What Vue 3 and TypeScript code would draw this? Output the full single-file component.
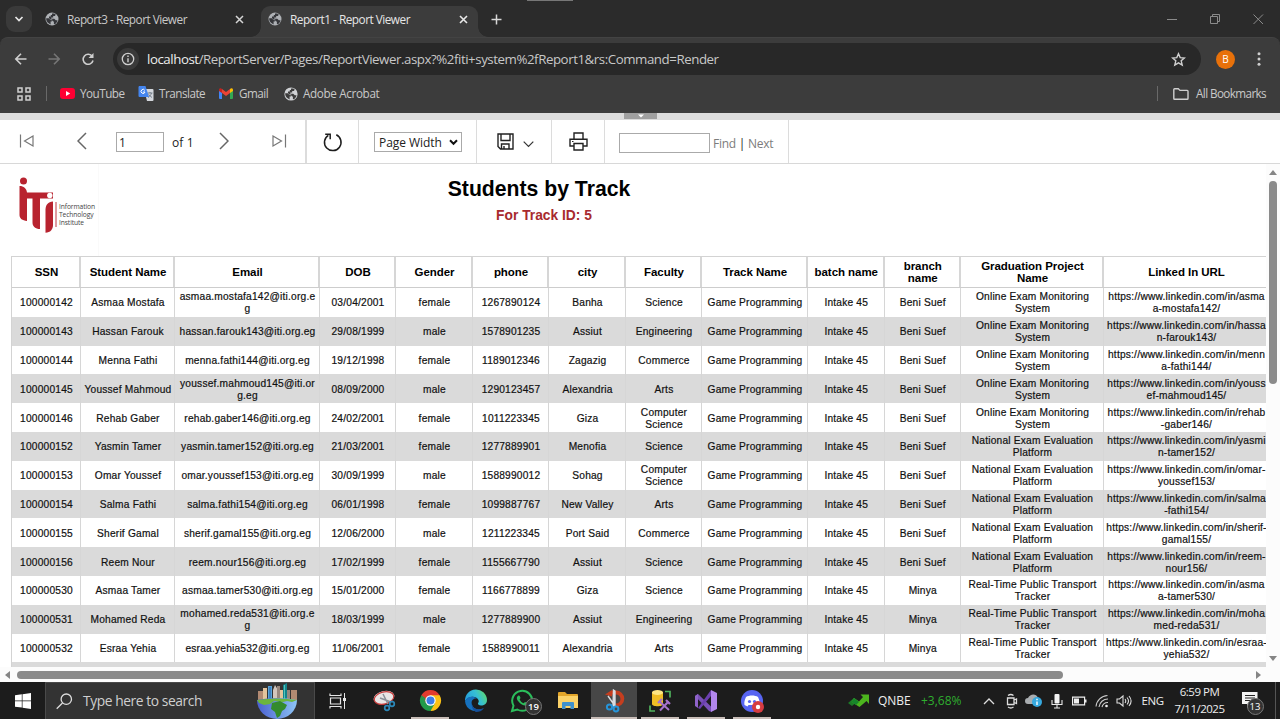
<script setup lang="ts">
interface Student {
  ssn: string
  name: string
  email: string
  dob: string
  gender: string
  phone: string
  city: string
  faculty: string
  branch: string
  project: string
  link: string
}

const headers: string[] = [
  'SSN', 'Student Name', 'Email', 'DOB', 'Gender', 'phone', 'city', 'Faculty',
  'Track Name', 'batch name', 'branch\nname', 'Graduation Project\nName', 'Linked In URL',
]

const exam = 'Online Exam Monitoring\nSystem'
const national = 'National Exam Evaluation\nPlatform'
const transport = 'Real-Time Public Transport\nTracker'
const base = 'https://www.linkedin.com/in/'

function student(
  ssn: string, name: string, email: string, dob: string, gender: string, phone: string,
  city: string, faculty: string, branch: string, project: string, link: string,
): Student {
  return { ssn, name, email, dob, gender, phone, city, faculty, branch, project, link: base + link }
}

const students: Student[] = [
  student('100000142', 'Asmaa Mostafa', 'asmaa.mostafa142@iti.org.e\ng', '03/04/2001', 'female', '1267890124', 'Banha', 'Science', 'Beni Suef', exam, 'asma\na-mostafa142/'),
  student('100000143', 'Hassan Farouk', 'hassan.farouk143@iti.org.eg', '29/08/1999', 'male', '1578901235', 'Assiut', 'Engineering', 'Beni Suef', exam, 'hassa\nn-farouk143/'),
  student('100000144', 'Menna Fathi', 'menna.fathi144@iti.org.eg', '19/12/1998', 'female', '1189012346', 'Zagazig', 'Commerce', 'Beni Suef', exam, 'menn\na-fathi144/'),
  student('100000145', 'Youssef Mahmoud', 'youssef.mahmoud145@iti.or\ng.eg', '08/09/2000', 'male', '1290123457', 'Alexandria', 'Arts', 'Beni Suef', exam, 'youss\nef-mahmoud145/'),
  student('100000146', 'Rehab Gaber', 'rehab.gaber146@iti.org.eg', '24/02/2001', 'female', '1011223345', 'Giza', 'Computer\nScience', 'Beni Suef', exam, 'rehab\n-gaber146/'),
  student('100000152', 'Yasmin Tamer', 'yasmin.tamer152@iti.org.eg', '21/03/2001', 'female', '1277889901', 'Menofia', 'Science', 'Beni Suef', national, 'yasmi\nn-tamer152/'),
  student('100000153', 'Omar Youssef', 'omar.youssef153@iti.org.eg', '30/09/1999', 'male', '1588990012', 'Sohag', 'Computer\nScience', 'Beni Suef', national, 'omar-\nyoussef153/'),
  student('100000154', 'Salma Fathi', 'salma.fathi154@iti.org.eg', '06/01/1998', 'female', '1099887767', 'New Valley', 'Arts', 'Beni Suef', national, 'salma\n-fathi154/'),
  student('100000155', 'Sherif Gamal', 'sherif.gamal155@iti.org.eg', '12/06/2000', 'male', '1211223345', 'Port Said', 'Commerce', 'Beni Suef', national, 'sherif-\ngamal155/'),
  student('100000156', 'Reem Nour', 'reem.nour156@iti.org.eg', '17/02/1999', 'female', '1155667790', 'Assiut', 'Science', 'Beni Suef', national, 'reem-\nnour156/'),
  student('100000530', 'Asmaa Tamer', 'asmaa.tamer530@iti.org.eg', '15/01/2000', 'female', '1166778899', 'Giza', 'Science', 'Minya', transport, 'asma\na-tamer530/'),
  student('100000531', 'Mohamed Reda', 'mohamed.reda531@iti.org.e\ng', '18/03/1999', 'male', '1277889900', 'Assiut', 'Engineering', 'Minya', transport, 'moha\nmed-reda531/'),
  student('100000532', 'Esraa Yehia', 'esraa.yehia532@iti.org.eg', '11/06/2001', 'female', '1588990011', 'Alexandria', 'Arts', 'Minya', transport, 'esraa-\nyehia532/'),
]

function cells(s: Student): string[] {
  return [s.ssn, s.name, s.email, s.dob, s.gender, s.phone, s.city, s.faculty,
    'Game Programming', 'Intake 45', s.branch, s.project, s.link]
}
</script>

<template>
  <div class="screen">
    <!-- Tab strip -->
    <div class="tabstrip">
      <div class="tabsearch">
        <svg width="10" height="8" viewBox="0 0 10 8"><path d="M1.500 2l3.500 3.500L8.500 2" fill="none" stroke="#e8e8e8" stroke-width="1.700" /></svg>
      </div>
      <div class="tab">
        <svg class="globe" width="14" height="14" viewBox="0 0 14 14"><circle cx="7" cy="7" r="6.500" fill="#aeb1b5" /><path d="M1.200 6.300h2.600l1.500 1.500h1.500v1.600H5.600v3l-1.500-.8C2 10.500 1 8.500 1.200 6.300zM7 1.500l2.200-.1 1.500 1-.7 1.600H8.200v1.500H6.300v1.300h3l1.500 1.500h1.700c-.2 1.700-1.300 3.200-2.600 4l-1-.2V9.700L7.200 8.800V7.300H5.200L4 6V4.500h1.800V3H7z" fill="#35363a" /></svg>
        <span class="tabtext t1">Report3 - Report Viewer</span>
        <svg class="x" width="9" height="9" viewBox="0 0 9 9"><path d="M1 1l7 7M8 1L1 8" stroke="#d5d5d5" stroke-width="1.500" /></svg>
      </div>
      <div class="tab active">
        <svg class="globe" width="14" height="14" viewBox="0 0 14 14"><circle cx="7" cy="7" r="6.500" fill="#aeb1b5" /><path d="M1.200 6.300h2.600l1.500 1.500h1.500v1.600H5.600v3l-1.500-.8C2 10.500 1 8.500 1.200 6.300zM7 1.500l2.200-.1 1.500 1-.7 1.600H8.200v1.500H6.300v1.300h3l1.500 1.500h1.700c-.2 1.700-1.300 3.200-2.600 4l-1-.2V9.700L7.200 8.800V7.300H5.200L4 6V4.500h1.800V3H7z" fill="#35363a" /></svg>
        <span class="tabtext t2">Report1 - Report Viewer</span>
        <svg class="x" width="9" height="9" viewBox="0 0 9 9"><path d="M1 1l7 7M8 1L1 8" stroke="#e8e8e8" stroke-width="1.600" /></svg>
      </div>
      <svg class="plus" width="11" height="11" viewBox="0 0 11 11"><path d="M5.500 .5v10M.5 5.500h10" stroke="#d8d8d8" stroke-width="1.500" /></svg>
      <svg class="winctl" width="98" height="12" viewBox="0 0 98 12"><path d="M0 6.500h10M43.500 3.500h7v7h-7zM45.500 3.500v-2h7v7h-2M86.500 1.500l9.500 9.500M96 1.500L86.500 11" fill="none" stroke="#8b8b8b" /></svg>
      <div class="topmark"></div>
    </div>

    <!-- Address bar -->
    <div class="addressbar">
      <svg class="nav" width="84" height="14" viewBox="0 0 84 14" fill="none" stroke-width="1.600">
        <path d="M12.500 7H1.800M7 1.700L1.800 7 7 12.300" stroke="#cfcfcf" />
        <path d="M34.500 7h10.700M40 1.700L45.200 7 40 12.300" stroke="#767676" />
        <path d="M78.300 4.500A5 5 0 1 0 79 8.500" stroke="#cfcfcf" /><path d="M79.500 1v5h-5z" fill="#cfcfcf" />
      </svg>
      <div class="omnibox">
        <span class="info"><svg width="14" height="14" viewBox="0 0 14 14"><circle cx="7" cy="7" r="5.700" fill="none" stroke="#d0d0d0" stroke-width="1.300" /><path d="M7 6.200v4M7 3.600v1.500" stroke="#d0d0d0" stroke-width="1.400" /></svg></span>
        <span class="url"><b>localhost</b>/ReportServer/Pages/ReportViewer.aspx?%2fiti+system%2fReport1&amp;rs:Command=Render</span>
        <svg class="star" width="15" height="15" viewBox="0 0 15 15"><path d="M7.500 1.700l1.700 3.900 4.200.4-3.200 2.800 1 4.200-3.700-2.200L3.800 13l1-4.200L1.600 6l4.200-.4z" fill="none" stroke="#d0d0d0" stroke-width="1.400" /></svg>
      </div>
      <span class="avatar">B</span>
      <svg class="dots" width="4" height="14" viewBox="0 0 4 14" fill="#cfcfcf"><circle cx="2" cy="1.700" r="1.500" /><circle cx="2" cy="7" r="1.500" /><circle cx="2" cy="12.300" r="1.500" /></svg>
    </div>

    <!-- Bookmarks -->
    <div class="bookmarks">
      <svg class="grid" width="14" height="14" viewBox="0 0 14 14"><path d="M1 1h4v4H1zM9 1h4v4H9zM1 9h4v4H1zM9 9h4v4H9z" fill="none" stroke="#cfcfcf" stroke-width="1.500" /></svg>
      <i class="bar"></i>
      <div class="bm yt"><svg width="15" height="11" viewBox="0 0 15 11"><rect width="15" height="11" rx="3" fill="#ff0033" /><path d="M6 3l4.200 2.500L6 8z" fill="#fff" /></svg><span>YouTube</span></div>
      <div class="bm trn"><svg width="16" height="15" viewBox="0 0 16 15"><path d="M6 3h8.500a1 1 0 0 1 1 1v10a1 1 0 0 1-1 1H9z" fill="#d4d7dc" /><path d="M9.500 7h5M12 6v1M13.500 7c-.5 2-2 3.500-3.500 4.500M10.500 8.500l3.500 3" stroke="#6b7480" stroke-width=".9" fill="none" /><path d="M1 0h6.500l3.500 11H1.500a1 1 0 0 1-1-1V1z" fill="#4485ee" /><path d="M6.800 4.400A2 2 0 1 0 7 6H5" fill="none" stroke="#fff" /></svg><span>Translate</span></div>
      <div class="bm gm"><svg width="14" height="11" viewBox="0 0 14 11"><path d="M0 2l3 2v7H1a1 1 0 0 1-1-1z" fill="#4285f4" /><path d="M14 2l-3 2v7h2a1 1 0 0 0 1-1z" fill="#34a853" /><path d="M3 1l4 3 4-3v4L7 8 3 5z" fill="#ea4335" /><path d="M0 2C0 0 2 0 3 1v4L0 3z" fill="#c5221f" /><path d="M14 2c0-2-2-2-3-1v4l3-2z" fill="#fbbc04" /></svg><span>Gmail</span></div>
      <div class="bm aa"><svg width="14" height="14" viewBox="0 0 14 14"><circle cx="7" cy="7" r="6.600" fill="#d0d2d5" /><path d="M1.200 6.300h2.600l1.500 1.500h1.500v1.600H5.600v3l-1.500-.8C2 10.500 1 8.500 1.200 6.300zM7 1.500l2.200-.1 1.500 1-.7 1.600H8.200v1.500H6.300v1.300h3l1.500 1.500h1.700c-.2 1.700-1.300 3.200-2.600 4l-1-.2V9.700L7.200 8.800V7.300H5.200L4 6V4.500h1.800V3H7z" fill="#3c3c3c" /></svg><span>Adobe Acrobat</span></div>
      <i class="bar right"></i>
      <div class="bm all"><svg width="16" height="12" viewBox="0 0 16 12"><path d="M.8 1.600q0-.8.8-.8h3.700L7 2.400h7.200q.8 0 .8.800v7.200q0 .8-.8.8H1.600q-.8 0-.8-.8z" fill="none" stroke="#cfcfcf" stroke-width="1.400" /></svg><span>All Bookmarks</span></div>
    </div>

    <div class="splitter"><span><svg width="6" height="4" viewBox="0 0 6 4"><path d="M0 .5h6L3 3.500z" fill="#fff" /></svg></span></div>

    <!-- Report toolbar -->
    <div class="rtoolbar">
      <div class="group pager">
        <svg class="p-first" width="15" height="14" viewBox="0 0 15 14"><path d="M1.500.5v13M14 2L5.500 7l8.500 5z" fill="none" stroke="#777" stroke-width="1.200" /></svg>
        <svg class="p-prev" width="10" height="18" viewBox="0 0 10 18"><path d="M9 1L1 9l8 8" fill="none" stroke="#666" stroke-width="1.500" /></svg>
        <span class="box page">1</span>
        <span class="of">of 1</span>
        <svg class="p-next" width="10" height="18" viewBox="0 0 10 18"><path d="M1 1l8 8-8 8" fill="none" stroke="#666" stroke-width="1.500" /></svg>
        <svg class="p-last" width="15" height="14" viewBox="0 0 15 14"><path d="M13.500.5v13M1 2l8.500 5L1 12z" fill="none" stroke="#777" stroke-width="1.200" /></svg>
      </div>
      <div class="group refresh">
        <svg width="20" height="20" viewBox="0 0 20 20"><path d="M13.300 2.800A8.300 8.300 0 1 1 5.300 3.300M2.200 2.300h5v5" fill="none" stroke="#1d1d1d" stroke-width="1.500" /></svg>
      </div>
      <div class="group zoom">
        <span class="box select"><span>Page Width</span><svg width="9" height="7" viewBox="0 0 9 7"><path d="M1 1.300l3.500 3.500L8 1.300" fill="none" stroke="#111" stroke-width="2" /></svg></span>
      </div>
      <div class="group save">
        <svg width="17" height="17" viewBox="0 0 17 17"><path d="M1 1h15v15H3.500L1 13.500zM4 1v6.500h9V1M4.500 16v-5h7.500v5M7 13v3" fill="none" stroke="#222" stroke-width="1.400" /></svg>
        <svg class="caret" width="11" height="7" viewBox="0 0 11 7"><path d="M.7 .7l4.800 4.800L10.300.7" fill="none" stroke="#333" stroke-width="1.200" /></svg>
      </div>
      <div class="group print">
        <svg width="19" height="19" viewBox="0 0 19 19"><path d="M5 7V1h9v6M4.500 14H1V7.200h17V14h-3.500M5 11.500h9V18H5z" fill="none" stroke="#222" stroke-width="1.400" /><path d="M3 9.500h1.500" stroke="#222" /></svg>
      </div>
      <div class="group find">
        <span class="box search"></span>
        <span class="fn">Find <b>|</b> Next</span>
      </div>
    </div>

    <!-- Report body -->
    <div class="viewer">
      <div class="report">
        <div class="head">
          <div class="logo">
            <svg width="38" height="56" viewBox="0 0 38 56">
              <circle cx="4.500" cy="4" r="3.500" fill="#b8232f" />
              <path d="M.5 9c4.200 0 7 2.500 7.500 6.500h26v6H21v30.500c-4.500 0-7.500-2.500-7.500-6.500V21.500H8v22.500C3.300 43.500.5 41.500.5 38z" fill="#b8232f" />
              <path d="M34 24.500V48c0 4.500-2.700 7.500-7.500 7.800V32.500c0-4.500 2.500-7.500 7.500-8z" fill="#b8232f" />
              <circle cx="30.800" cy="18.500" r="2.700" fill="#fff" />
              <path d="M37 25v25" stroke="#b8232f" stroke-width=".9" />
            </svg>
            <span>Information<br>Technology<br>Institute</span>
          </div>
          <div class="titles">
            <h1>Students by Track</h1>
            <h2>For Track ID: 5</h2>
          </div>
        </div>
        <div class="table">
          <div class="tr th"><div v-for="h in headers" :key="h" class="td"><span>{{ h }}</span></div></div>
          <div v-for="s in students" :key="s.ssn" class="tr"><div v-for="(c, i) in cells(s)" :key="i" class="td"><span>{{ c }}</span></div></div>
          <div class="tr"></div>
        </div>
      </div>
      <div class="vscroll">
        <svg width="8" height="5" viewBox="0 0 8 5"><path d="M0 5l4-5 4 5z" fill="#858585" /></svg>
        <i></i>
        <svg class="down" width="8" height="5" viewBox="0 0 8 5"><path d="M0 0l4 5 4-5z" fill="#858585" /></svg>
      </div>
    </div>
    <div class="hscroll">
      <svg width="5" height="8" viewBox="0 0 5 8"><path d="M5 0L0 4l5 4z" fill="#858585" /></svg>
      <i></i>
      <svg class="right" width="5" height="8" viewBox="0 0 5 8"><path d="M0 0l5 4-5 4z" fill="#858585" /></svg>
    </div>

    <!-- Taskbar -->
    <div class="taskbar">
      <div class="start"><svg width="16" height="16" viewBox="0 0 16 16" fill="#fff"><path d="M0 2.200l6.800-.9v6.300H0zM7.500 1.200L16 0v7.600H7.500zM0 8.300h6.800v6.300L0 13.700zM7.500 8.300H16V16l-8.500-1.200z" /></svg></div>
      <div class="tsearch">
        <svg width="17" height="17" viewBox="0 0 17 17"><circle cx="10.300" cy="6.200" r="5.200" fill="none" stroke="#ddd" stroke-width="1.300" /><path d="M6.500 10L.7 15.800" stroke="#ddd" stroke-width="1.300" /></svg>
        <span>Type here to search</span>
        <svg class="city" width="42" height="36" viewBox="0 0 42 36">
          <defs><linearGradient id="sea" x1="0" x2="1"><stop offset="0" stop-color="#4a5fd0" /><stop offset="1" stop-color="#8dc4f5" /></linearGradient></defs>
          <path d="M2 8h5v12H2zM35 7h6v10h-6z" fill="#b28a72" />
          <path d="M7 5h4v15H7zM24 7h4v12h-4z" fill="#e3c49c" />
          <path d="M12 3h4v15h-4z" fill="#58a4dc" /><path d="M13.500 4h1v13h-1z" fill="#245ea6" />
          <path d="M17 7l2-5 3 5v11h-5z" fill="#d2c6bd" /><path d="M21 3h3v15h-3zM31 7h3v11h-3z" fill="#99887e" />
          <path d="M27 2l4-2v18h-4z" fill="#14848c" /><path d="M28.500 2v15" stroke="#52c7bd" />
          <path d="M1 17q20-4 40 0A20 19 0 0 1 21 36 20 19 0 0 1 1 17z" fill="url(#sea)" />
          <path d="M1 17q20-3 40 0l-5 2-5-1-4 1-9-1-4 3-6 1-5-2z" fill="#6cb53f" />
          <path d="M16 20l8-2 7 4-2 4-3 2-2 5-3 2-2-6-4-3z" fill="#348b2d" />
        </svg>
      </div>
      <div class="app"><svg width="18" height="16" viewBox="0 0 18 16"><path d="M1 .5v2h11v-2M1 15.500v-2h11v2M1.500 5h10v6h-10z" fill="none" stroke="#e6e6e6" stroke-width="1.200" /><path d="M15.500 0v16" stroke="#e6e6e6" /><path d="M14 5h3v3h-3z" fill="#e6e6e6" /></svg></div>
      <div class="app"><svg width="24" height="24" viewBox="0 0 24 24"><ellipse cx="12" cy="8.500" rx="10.500" ry="6.500" transform="rotate(-14 12 8.500)" fill="#e9e6e6" /><ellipse cx="12" cy="9" rx="10" ry="6" transform="rotate(-14 12 9)" fill="none" stroke="#c63b3b" stroke-width="1.200" /><path d="M11 5l5 10M8 9l11 4" stroke="#8c9199" stroke-width="1.500" /><circle cx="15" cy="19" r="2.300" fill="none" stroke="#2b87b8" stroke-width="1.700" /><circle cx="20" cy="15" r="2.300" fill="none" stroke="#2b87b8" stroke-width="1.700" /></svg></div>
      <div class="app run"><svg width="23" height="23" viewBox="0 0 24 24"><path d="M12 12L2.470 6.500A11 11 0 0 1 21.530 6.500z" fill="#e33b2e" /><path d="M12 12l9.530-5.500A11 11 0 0 1 12 23z" fill="#fbc116" /><path d="M12 12v11A11 11 0 0 1 2.470 6.500z" fill="#229a4a" /><path d="M12 6.500h9.530L16.800 14.700z" fill="#fbc116" /><path d="M7.200 14.700L2.470 6.500 12 6.500z" fill="#e33b2e" /><path d="M7.200 14.700L2.470 6.500l4 3z" fill="#229a4a" /><path d="M16.800 14.700L12 23l-5-8z" fill="#229a4a" /><circle cx="12" cy="12" r="5.400" fill="#fff" /><circle cx="12" cy="12" r="4.200" fill="#3d7de8" /></svg></div>
      <div class="app"><svg width="24" height="24" viewBox="0 0 24 24"><defs><linearGradient id="ea" x1="0" y1=".6" x2="1" y2=".2"><stop offset="0" stop-color="#239cdf" /><stop offset=".55" stop-color="#36bfd4" /><stop offset="1" stop-color="#60dc67" /></linearGradient></defs><path d="M1 12A11 11 0 0 1 23 11c0 4-3 5.500-6 5.500-2 0-3.500-1-3-2.200 1-1.200.9-2.300.3-3.500C12.500 7 5 6 1 12z" fill="url(#ea)" /><path d="M1 12c2-4.500 8-5.500 12-2.500-4-.5-5.700 2-5.300 5 .6 4.500 6 8 12 4.500A11 11 0 0 1 1 12z" fill="#1671be" /><path d="M8 14c-.4 4.500 5 8.500 12 5-2 3-5 4-8 4-3-1.500-5-5.500-4-9z" fill="#15509a" /></svg></div>
      <div class="app"><svg width="24" height="24" viewBox="0 0 24 24"><path d="M2 22l1.500-5.300A10 10 0 1 1 7.300 20.500z" fill="#1c1c1c" stroke="#2bbd5b" stroke-width="2" /><path d="M8.200 6.800c1.200-.7 1.700 0 2.300 2.300l-.9 1.300c1 2 2.300 3.100 4.100 3.900l1.300-1.200c2 .8 2.600 1.200 2.300 2.200-2.500 3.500-10-2-10.500-6 0-1 .6-1.900 1.400-2.500z" fill="#2bbd5b" /></svg><span class="badge">19</span></div>
      <div class="app"><svg width="22" height="20" viewBox="0 0 22 20"><path d="M1 2q0-1 1-1h6l2 2h10q1 0 1 1v5H1z" fill="#e2a52a" /><path d="M1 5h20v12H1z" fill="#fbd268" /><path d="M5 18v-6q0-1 1-1h10q1 0 1 1v6h-3.500v-3h-5v3z" fill="#3f91cc" /></svg></div>
      <div class="app run current"><svg width="22" height="24" viewBox="0 0 22 24"><path d="M9 1.500h4a7.500 7.500 0 0 1 0 16.500v-3.500a4 4 0 0 0 0-9H9z" fill="#c53e1f" /><path d="M2 5.500L9 1v6.500z" fill="#c53e1f" /><path d="M10.500 1l1.500 1v15h-2zM5 7l7 10" fill="#d9dce0" stroke="#d9dce0" stroke-width="1.400" /><circle cx="6.500" cy="18" r="2.600" fill="none" stroke="#2794d8" stroke-width="2" /><circle cx="13" cy="20" r="2.400" fill="none" stroke="#2794d8" stroke-width="2" /></svg></div>
      <div class="app run"><svg width="22" height="24" viewBox="0 0 22 24"><path d="M3 3v12c0 3 11 3 11 0V3z" fill="#f0bd25" /><ellipse cx="8.500" cy="3.500" rx="5.500" ry="2.500" fill="#ffe682" /><path d="M16 2.500h5v6M1 16.500V22h5" fill="none" stroke="#4fb05b" stroke-width="1.700" /><path d="M10 12l10 9M19.500 12.500L11 21.500" stroke="#a673cb" stroke-width="2" /><path d="M9 14l4-4M17 11l4 4" stroke="#a673cb" stroke-width="2.200" /></svg></div>
      <div class="app run"><svg width="24" height="24" viewBox="0 0 24 24"><path d="M1 7l3-2 13.500 13V23L15 22z" fill="#7950b7" /><path d="M1 7l3-2v14l-3-2z" fill="#8f63ca" /><path d="M4 19L17 1v6L6 20z" fill="#6b3fae" /><path d="M17 1l6 3v16l-6 3z" fill="#b287ed" /></svg></div>
      <div class="app run"><svg width="24" height="24" viewBox="0 0 24 24"><circle cx="12" cy="12" r="11" fill="#5865f2" /><path d="M6 8c3-2 9-2 12 0 1.500 3 2 5.500 1.500 8l-3 1.500-1-1.500h-7l-1 1.500-3-1.500C4 13.500 4.500 11 6 8z" fill="#fff" /><circle cx="9.500" cy="12.500" r="1.600" fill="#5865f2" /><circle cx="14.500" cy="12.500" r="1.600" fill="#5865f2" /><circle cx="18" cy="18" r="6" fill="#d63c41" /><circle cx="18" cy="18" r="2.200" fill="#fff" /></svg></div>
      <div class="stock">
        <svg width="21" height="13" viewBox="0 0 21 13"><path d="M0 9l6-5 4 3-6 5z" fill="#1c7a27" /><path d="M6 4l5 3.500L15 3 12.500.5H21V10l-2.500-3-7 6L3.500 8z" fill="#4cb51e" /><path d="M6 4l5 4-3 3-4.500-3z" fill="#16862b" /></svg>
        <span class="q">QNBE</span><span class="pct">+3,68%</span>
      </div>
      <div class="tray">
        <span><svg width="12" height="8" viewBox="0 0 12 8"><path d="M1 7l5-5 5 5" fill="none" stroke="#ddd" stroke-width="1.300" /></svg></span>
        <span><svg width="13" height="16" viewBox="0 0 13 16"><path d="M2.500 5h6.500v6.500H2.500zM9 7l2.500-1v4.500L9 9.500M3 2.500q2.800-2 5.500 0M3 14q2.800 2 5.500 0" fill="none" stroke="#ddd" stroke-width="1.300" /></svg></span>
        <span><svg width="18" height="15" viewBox="0 0 18 15"><path d="M3 11a3 3 0 0 1 0-6C5 1 11 0 13 5l2 3-3 3z" fill="#a9adb0" /><circle cx="12" cy="9" r="5" fill="#36a9df" /><path d="M12 8.500v3.500M12 5.700v1.500" stroke="#fff" stroke-width="1.400" /></svg></span>
        <span><svg width="12" height="16" viewBox="0 0 12 16"><rect x="3.500" y="1" width="5" height="9.500" rx="1" fill="#f2f2f2" /><path d="M1 7v4.500h10V7M6 12v3M3 15h6" fill="none" stroke="#e8e8e8" stroke-width="1.100" /></svg></span>
        <span><svg width="15" height="10" viewBox="0 0 15 10"><path d="M.6 1.100h12v7.800h-12z" fill="none" stroke="#eee" stroke-width="1.200" /><path d="M2 2.500h5v5H2zM13 3.500h1.500v3H13z" fill="#eee" /></svg></span>
        <span><svg width="14" height="14" viewBox="0 0 14 14"><path d="M1 12.500A12 12 0 0 1 12.500 1.500M4 13a9 9 0 0 1 9-8M7 13.200a5.500 5.500 0 0 1 6-4.700" fill="none" stroke="#ccc" stroke-width="1.100" /><circle cx="11.500" cy="12" r="1.300" fill="#eee" /></svg></span>
        <span><svg width="16" height="14" viewBox="0 0 16 14"><path d="M1 5h2.500L7 2v10L3.500 9H1zM9 5q1.500 2 0 4M11 3.500q3 3.500 0 7M13 2q4.200 5 0 10" fill="none" stroke="#ddd" stroke-width="1.100" /></svg></span>
      </div>
      <span class="eng">ENG</span>
      <div class="clock"><span>6:59 PM</span><span class="date">7/11/2025</span></div>
      <div class="notif"><svg width="16" height="16" viewBox="0 0 16 16"><path d="M0 0h15.500v12H8.500L5 16v-4H0z" fill="#f3f3f3" /><path d="M3 3.500h10M3 6h10M3 8.500h6" stroke="#222" /></svg><span class="badge">13</span></div>
      <i class="desk"></i>
    </div>
  </div>
</template>

<style>
html, body { margin: 0; overflow: hidden; background: #1c1c1c; }
</style>

<style scoped>
.screen { width: 1280px; height: 719px; display: flex; flex-direction: column; background: #2b2b2b; font-family: "Open Sans", "Noto Sans", sans-serif; overflow: hidden; }
.screen * { box-sizing: border-box; }
svg { display: block; flex: none; }
span { white-space: nowrap; }

.tabstrip { position: relative; height: 37px; flex: none; background: #2b2b2b; display: flex; align-items: center; padding-top: 1px; }
.tabsearch { width: 26px; height: 26px; margin-left: 6px; border-radius: 9px; background: #3a3a3a; display: flex; align-items: center; justify-content: center; }
.tab { height: 31px; width: 227px; margin-left: 1px; padding: 0 16px 0 12px; display: flex; align-items: center; }
.tab.active { width: 217px; align-self: flex-end; background: #3c3c3c; border-radius: 9px 9px 0 0; padding: 0 10px 0 7px; position: relative; margin-left: 1px; }
.tab.active::before, .tab.active::after { content: ""; position: absolute; bottom: 0; width: 10px; height: 10px; }
.tab.active::before { left: -10px; background: radial-gradient(circle at 0 0, transparent 9.500px, #3c3c3c 10px); }
.tab.active::after { right: -10px; background: radial-gradient(circle at 100% 0, transparent 9.500px, #3c3c3c 10px); }
.tab.active > * { margin-bottom: 5px; }
.tabtext { margin-left: 8px; font-size: 11.800px; letter-spacing: -0.5px; color: #c8c8c8; line-height: 16px; }
.t2 { color: #e6e6e6; }
.x { margin-left: auto; }
.plus { margin-left: 13px; }
.winctl { margin-left: auto; margin-right: 15px; }
.topmark { position: absolute; left: 527px; top: 0; width: 46px; height: 1px; background: #777; }

.addressbar { height: 43px; flex: none; background: #3c3c3c; display: flex; align-items: center; padding: 0 0 0 14px; border-top: 1px solid #434343; border-radius: 8px 8px 0 0; }
.nav { margin-right: 15px; }
.omnibox { width: 1088px; height: 32px; border-radius: 16px; background: #282828; display: flex; align-items: center; padding: 0 15px 0 4px; }
.info { width: 22px; height: 22px; border-radius: 50%; background: #3a3a3a; display: flex; align-items: center; justify-content: center; }
.url { margin-left: 8px; font-size: 13.300px; letter-spacing: -0.45px; color: #c7c7c7; line-height: 20px; }
.url b { font-weight: 400; color: #ededed; }
.star { margin-left: auto; }
.avatar { margin-left: 15px; width: 19px; height: 19px; border-radius: 50%; background: #e8710a; color: #fff; font-size: 10px; line-height: 19px; text-align: center; }
.dots { margin-left: 22px; }

.bookmarks { height: 33px; flex: none; background: #3c3c3c; display: flex; align-items: center; padding: 0 14px 6px 17px; color: #c9c9c9; font-size: 11.700px; letter-spacing: -0.5px; }
.bar { width: 1px; height: 15px; background: #696969; margin-left: 15px; }
.bm { display: flex; align-items: center; line-height: 16px; }
.bm span { margin: 0 0 2px 5px; }
.yt { margin-left: 13px; width: 78px; }
.trn { width: 81px; }
.gm { width: 65px; }
.gm span { margin-left: 6px; }
.aa { letter-spacing: -0.35px; }
.bar.right { margin-left: auto; margin-right: 15px; }
.all { width: 93px; letter-spacing: -0.6px; }
.all span { margin-left: 7px; }

.splitter { height: 7px; flex: none; background: #dcdcdc; padding-left: 624px; }
.splitter span { display: flex; width: 33px; height: 6px; background: #a0a0a0; align-items: center; justify-content: center; }

.rtoolbar { height: 44px; flex: none; background: #fff; border-bottom: 1px solid #d8d8d8; display: flex; color: #222; font-size: 12px; }
.group { display: flex; align-items: center; height: 43px; border-right: 1px solid #dcdcdc; }
.box { border: 1px solid #aaa; height: 20px; background: #fff; display: flex; align-items: center; }
.pager { width: 307px; border-right-width: 2px; padding-left: 19px; }
.p-first, .p-prev, .p-next, .p-last { margin-bottom: 1px; }
.p-prev { margin-left: 43px; }
.page { width: 48px; margin: 1px 0 0 29px; padding-left: 2px; }
.of { margin: 1px 0 0 8px; width: 22px; letter-spacing: 0.1px; }
.p-next { margin-left: 25px; }
.p-last { margin-left: 43px; }
.refresh { width: 52px; padding-left: 16px; }
.zoom { width: 118px; padding-left: 15px; }
.select { width: 88px; margin-top: 1px; padding-left: 4px; letter-spacing: -0.05px; justify-content: space-between; padding-right: 3px; }
.save { width: 75px; padding-left: 20px; }
.caret { margin: 6px 0 0 9px; }
.print { width: 53px; padding-left: 17px; }
.find { width: 184px; padding-left: 14px; }
.search { width: 91px; margin-top: 2px; }
.fn { margin: 3px 0 0 3px; color: #7c7c7c; letter-spacing: -0.25px; }
.fn b { font-weight: 400; color: #222; }

.viewer { height: 503px; flex: none; display: flex; background: #fdfdfd; }
.report { width: 1266px; overflow: hidden; padding-left: 11px; background: #fff; font-family: "Liberation Sans", Arial, sans-serif; }
.head { height: 92px; display: flex; }
.logo { width: 88px; display: flex; padding: 13px 0 0 8px; border-right: 1px solid #fafafa; }
.logo svg { overflow: visible; }
.logo span { margin: 26px 0 0 2px; font: 6.700px/8px "Open Sans", sans-serif; letter-spacing: -0.1px; color: #444; }
.titles { margin-left: 283px; width: 314px; text-align: center; }
h1 { margin: 12px 0 0; font-size: 21.200px; line-height: 25px; color: #000; white-space: nowrap; }
h2 { margin: 6px 0 0 10px; font-size: 13.800px; line-height: 17px; color: #a82a2e; }

.table { width: 1258px; border-left: 1px solid #d3d3d3; border-top: 1px solid #d3d3d3; font-size: 10.200px; color: #111; }
.table .tr { display: grid; grid-template-columns: 69px 94px 145px 76px 77px 76px 77px 76px 106px 76.500px 76.500px 143px 165px; height: 28.800px; background: #fff; }
.table .tr:nth-child(odd) { background: #dadada; }
.table .tr.th { height: 31px; background: #fff; border-bottom: 1px solid #cdcdcd; font-size: 11.500px; font-weight: 700; color: #000; }
.td { border-right: 1px solid #d6d6d6; display: flex; align-items: center; justify-content: center; text-align: center; line-height: 12px; padding: 2px 0 0 1px; overflow: hidden; letter-spacing: 0.2px; -webkit-text-stroke: 0.200px #111; }
.th .td { border-right-width: 2px; padding: 0 0 0 2px; letter-spacing: -0.05px; -webkit-text-stroke: 0; }
.td span { white-space: pre; }

.vscroll { width: 14px; display: flex; flex-direction: column; align-items: center; padding: 6px 0 6px; background: #fcfcfc; }
.vscroll i { width: 8px; height: 203px; margin-top: 6px; border-radius: 4px; background: #8b8b8b; }
.down { margin-top: auto; }
.hscroll { height: 15px; flex: none; display: flex; align-items: center; background: #fcfcfc; padding: 0 19px 0 5px; }
.hscroll i { width: 1046px; height: 8px; margin-left: 7px; border-radius: 4px; background: #8b8b8b; }
.hscroll .right { margin-left: auto; }

.taskbar { height: 37px; flex: none; background: #1c1c1c; display: flex; align-items: center; color: #eee; }
.start { width: 45px; padding-left: 15px; }
.tsearch { width: 270px; height: 37px; background: #333; border: 1px solid #4a4a4a; border-bottom: 0; display: flex; align-items: center; padding-left: 10px; font-size: 13.800px; letter-spacing: -0.42px; color: #cfcfcf; }
.tsearch span { margin: 0 0 1px 10px; }
.city { margin-left: auto; margin-right: 16px; }
.app { width: 46px; height: 37px; display: flex; align-items: center; justify-content: center; position: relative; }
.app.run::after { content: ""; position: absolute; bottom: 0; left: 4px; right: 4px; height: 2px; background: #c8bdb8; }
.app.current { background: #474747; }
.app.current::after { left: 0; right: 0; }
.badge { position: absolute; width: 17px; height: 17px; border-radius: 50%; background: #333; border: 1px solid #777; color: #fff; font-size: 9.500px; line-height: 15px; text-align: center; }
.app .badge { left: 26px; top: 16px; font-weight: 600; }
.stock { margin-left: 73px; display: flex; align-items: center; font-size: 12px; width: 130px; }
.q { margin-left: 9px; width: 43px; }
.pct { color: #2fae2f; }
.tray { display: flex; }
.tray > span { width: 22.500px; display: flex; justify-content: center; align-items: center; }
.eng { width: 37px; padding-left: 6px; font-size: 11.500px; letter-spacing: -0.4px; }
.clock { width: 54px; display: flex; flex-direction: column; align-items: center; font-size: 11.500px; line-height: 17px; letter-spacing: -0.5px; margin-bottom: 2px; }
.notif { width: 48px; height: 37px; position: relative; padding: 10px 0 0 15px; }
.notif .badge { left: 20px; top: 16px; }
.desk { width: 1px; height: 37px; background: #555; }
</style>
